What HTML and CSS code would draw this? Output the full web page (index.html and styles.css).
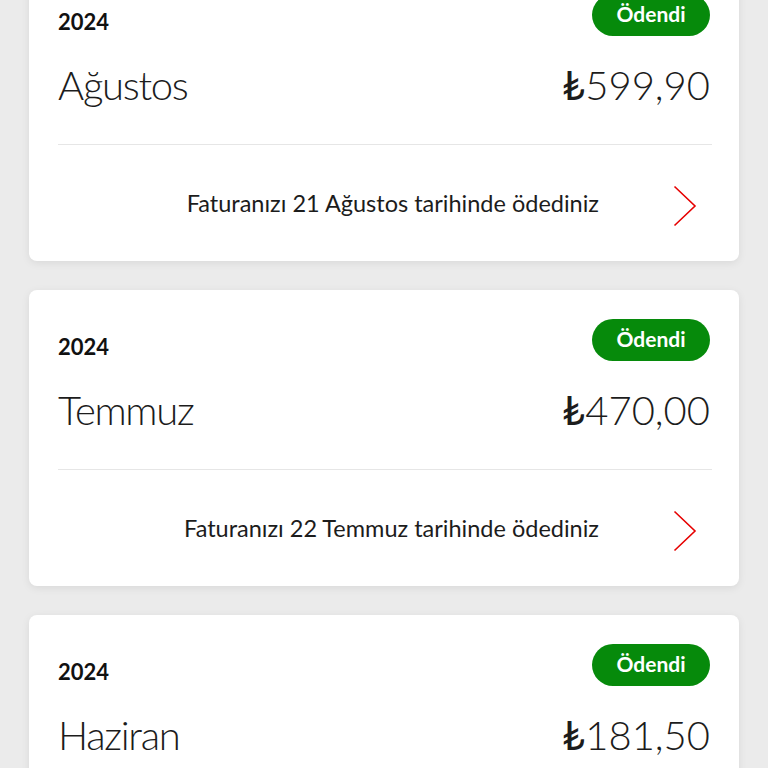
FILE: index.html
```html
<!DOCTYPE html>
<html lang="tr">
<head>
<meta charset="utf-8">
<link rel="stylesheet" href="styles.css">
</head>
<body>
<div class="list">
  <div class="card">
    <div class="top"><span class="year">2024</span><span class="badge">Ödendi</span></div>
    <div class="main"><span class="month">Ağustos</span><span class="amount"><span class="cur">₺</span>599,90</span></div>
    <div class="divider"></div>
    <div class="footer"><span class="note">Faturanızı 21 Ağustos tarihinde ödediniz</span><span class="chev"><svg width="24" height="42" viewBox="0 0 24 42"><path d="M1.5 1.5 L22 21 L1.5 40.5" fill="none" stroke="#e60000" stroke-width="1.6"/></svg></span></div>
  </div>
  <div class="card">
    <div class="top"><span class="year">2024</span><span class="badge">Ödendi</span></div>
    <div class="main"><span class="month">Temmuz</span><span class="amount"><span class="cur">₺</span>470,00</span></div>
    <div class="divider"></div>
    <div class="footer"><span class="note">Faturanızı 22 Temmuz tarihinde ödediniz</span><span class="chev"><svg width="24" height="42" viewBox="0 0 24 42"><path d="M1.5 1.5 L22 21 L1.5 40.5" fill="none" stroke="#e60000" stroke-width="1.6"/></svg></span></div>
  </div>
  <div class="card">
    <div class="top"><span class="year">2024</span><span class="badge">Ödendi</span></div>
    <div class="main"><span class="month">Haziran</span><span class="amount"><span class="cur">₺</span>181,50</span></div>
    <div class="divider"></div>
    <div class="footer"><span class="note">Faturanızı 20 Haziran tarihinde ödediniz</span><span class="chev"><svg width="24" height="42" viewBox="0 0 24 42"><path d="M1.5 1.5 L22 21 L1.5 40.5" fill="none" stroke="#e60000" stroke-width="1.6"/></svg></span></div>
  </div>
</div>
</body>
</html>
```
FILE: styles.css
```css
html, body {
  margin: 0;
  padding: 0;
  background: #ebebeb;
  overflow: hidden;
  height: 768px;
}
body {
  font-family: Lato, "Open Sans", "DejaVu Sans", sans-serif;
  color: #1c1c1c;
}
.list {
  display: flex;
  flex-direction: column;
  gap: 29px;
  padding: 0 29px;
  margin-top: -35px;
}
.card {
  background: #fff;
  border-radius: 8px;
  box-shadow: 0 2px 8px rgba(0,0,0,0.08);
  padding: 29px 29px 0 29px;
  height: 296px;
  box-sizing: border-box;
  display: flex;
  flex-direction: column;
}
.top {
  display: flex;
  justify-content: space-between;
  align-items: flex-end;
  height: 42px;
}
.year {
  font-weight: 700;
  font-size: 22px;
  line-height: 26px;
  color: #111;
  margin-bottom: 1px;
}
.badge {
  background: #068a0b;
  color: #fff;
  font-weight: 700;
  font-size: 21px;
  height: 42px;
  width: 118px;
  border-radius: 21px;
  display: flex;
  align-items: center;
  justify-content: center;
  box-sizing: border-box;
  padding-bottom: 4px;
}
.main {
  display: flex;
  justify-content: space-between;
  align-items: baseline;
  margin-top: 25px;
  line-height: 48px;
}
.month {
  font-size: 40px;
  font-weight: 300;
  letter-spacing: -1.3px;
}
.amount {
  font-size: 40px;
  font-weight: 300;
}
.cur {
  font-weight: 400;
}
.divider {
  height: 1px;
  background: #e6e6e6;
  margin-top: 35px;
  margin-right: -2px;
}
.footer {
  flex: 1;
  display: flex;
  justify-content: flex-end;
  align-items: center;
}
.note {
  font-size: 23.5px;
  color: #1c1c1c;
  white-space: nowrap;
  margin-right: 74px;
}
.chev {
  margin-right: 13px;
  margin-top: 6px;
  display: flex;
}
```
